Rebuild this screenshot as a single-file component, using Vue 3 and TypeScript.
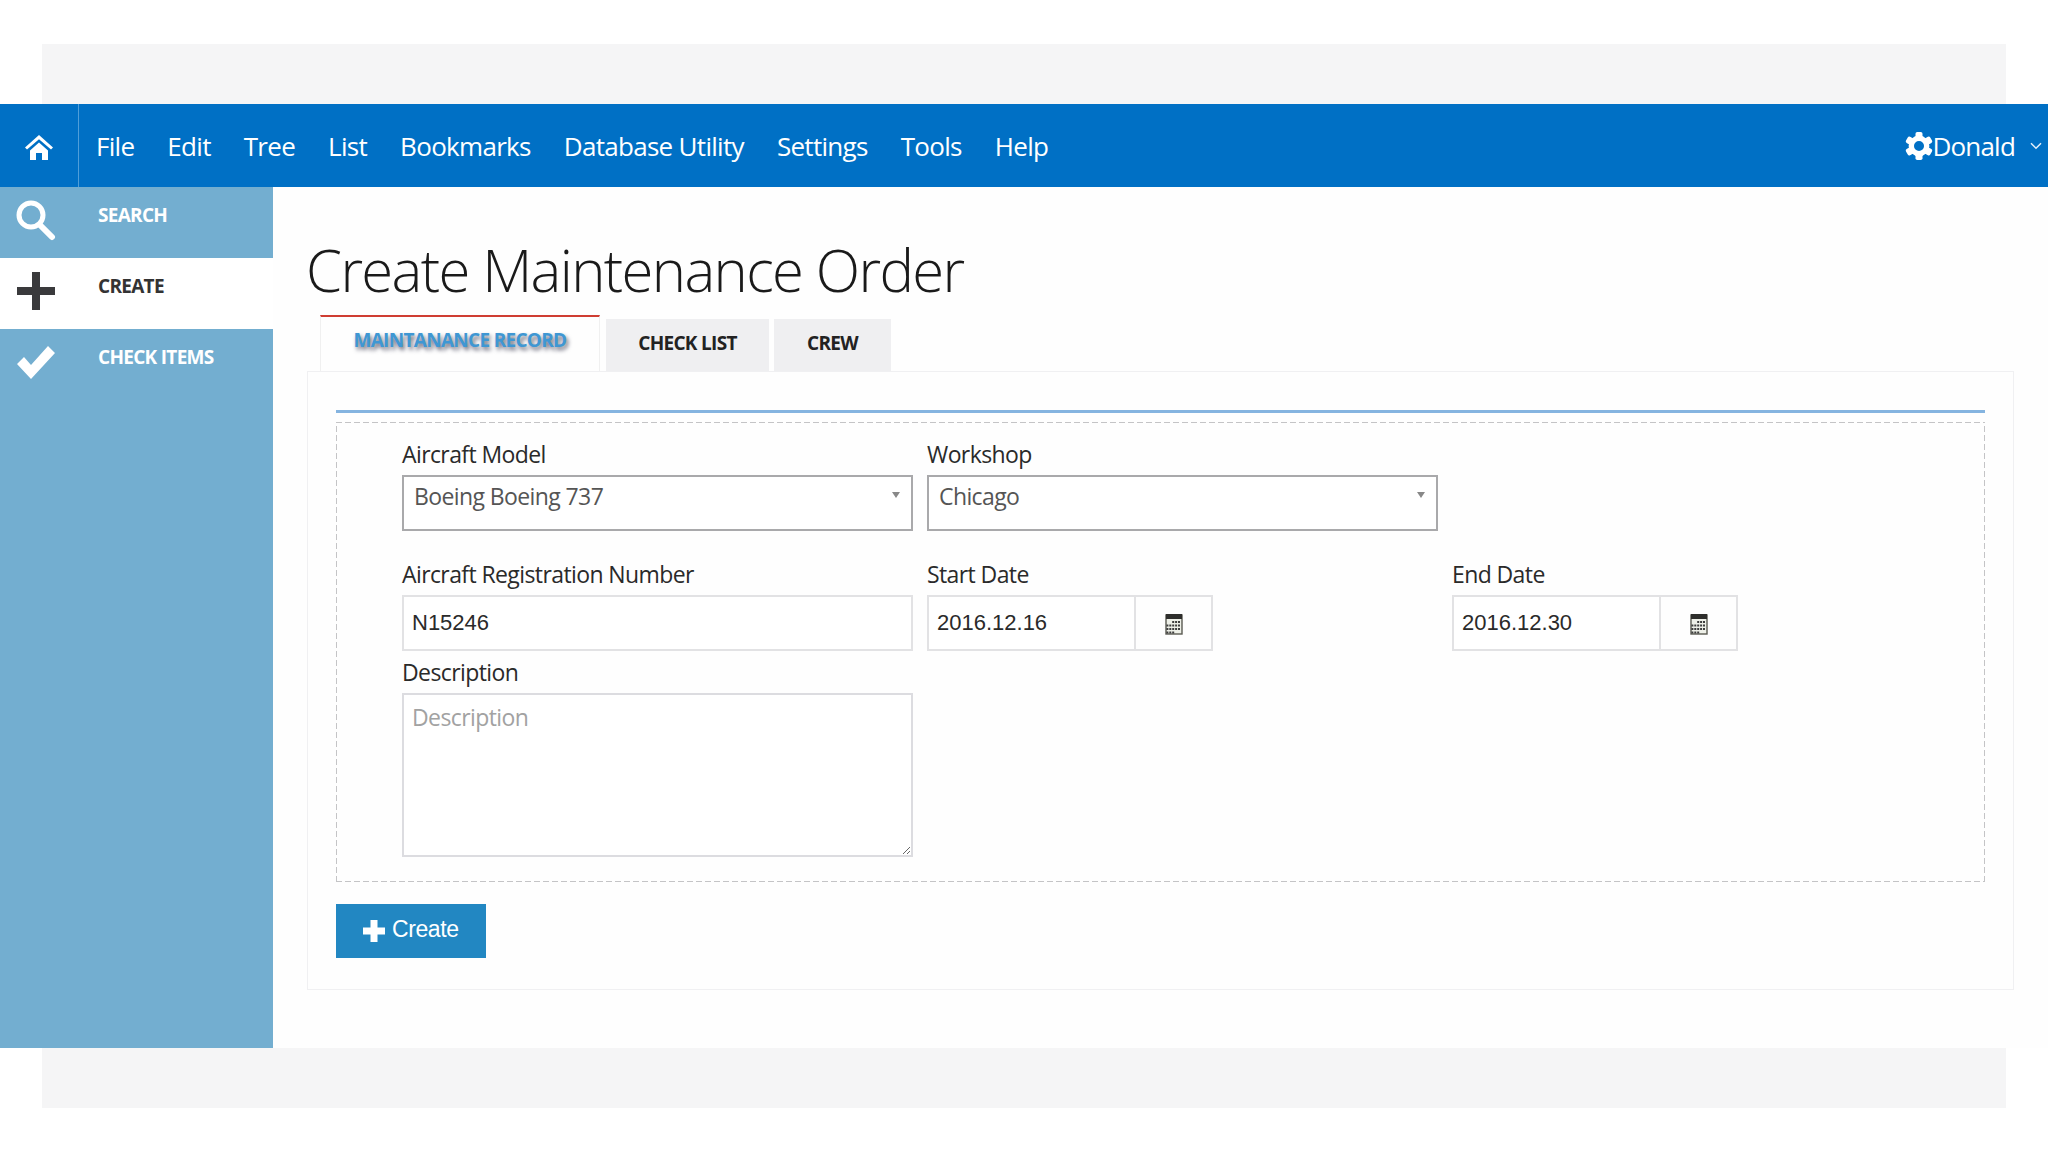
<template>
  <div class="page">
    <div class="band band-top"></div>

    <nav class="navbar">
      <a class="home-cell">
        <svg width="28" height="25" viewBox="0 0 28 25" fill="#fff">
          <path d="M14 0 L0 12.4 L2 14.6 L14 4.2 L26 14.6 L28 12.4 Z" />
          <path d="M5 15.4 L14 7.4 L23 15.4 V25 H17 V18 H11 V25 H5 Z" />
        </svg>
      </a>
      <ul class="menu">
        <li v-for="item in menuItems" :key="item">{{ item }}</li>
      </ul>
      <div class="user">
        <svg width="28" height="28" viewBox="-12 -12 24 24" fill="#fff">
          <rect v-for="a in gearTeeth" :key="a" x="-3" y="-12" width="6" height="6" rx="1.5" :transform="`rotate(${a})`" />
          <circle r="6.6" fill="none" stroke="#fff" stroke-width="4.6" />
        </svg>
        <span class="user-name">Donald</span>
        <svg class="user-caret" width="12" height="8" viewBox="0 0 12 8" fill="none" stroke="#e4effa" stroke-width="1.5">
          <path d="M1 1.2 L6 6.2 L11 1.2" />
        </svg>
      </div>
    </nav>

    <div class="body-row">
      <aside class="sidebar">
        <div class="side-item">
          <svg class="side-icon" width="42" height="42" viewBox="0 0 42 42" fill="none" stroke="#fff">
            <circle cx="16" cy="16" r="12" stroke-width="5" />
            <path d="M25 26 L37 38" stroke-width="6" stroke-linecap="round" />
          </svg>
          <span>SEARCH</span>
        </div>
        <div class="side-item active">
          <svg class="side-icon" width="42" height="42" viewBox="0 0 42 42" fill="#3a3a3c">
            <path d="M17 2 H25 V17 H40 V25 H25 V40 H17 V25 H2 V17 H17 Z" />
          </svg>
          <span>CREATE</span>
        </div>
        <div class="side-item">
          <svg class="side-icon" width="42" height="42" viewBox="0 0 42 42" fill="#fff">
            <path d="M2 23 L9 16 L16 24 L33 5 L40 12 L16 38 Z" />
          </svg>
          <span>CHECK ITEMS</span>
        </div>
      </aside>

      <main class="content">
        <h1 class="title">Create Maintenance Order</h1>

        <div class="tabs">
          <div class="tab active"><span>MAINTANANCE RECORD</span></div>
          <div class="tab check"><span>CHECK LIST</span></div>
          <div class="tab crew"><span>CREW</span></div>
        </div>

        <section class="panel">
          <div class="rule"></div>
          <div class="dashed">
            <div class="form-grid">
              <div class="field">
                <label>Aircraft Model</label>
                <div class="select"><span>Boeing Boeing 737</span><i class="arrow"></i></div>
              </div>
              <div class="field">
                <label>Workshop</label>
                <div class="select"><span>Chicago</span><i class="arrow"></i></div>
              </div>
              <div></div>

              <div class="field">
                <label>Aircraft Registration Number</label>
                <input class="input" type="text" value="N15246" readonly />
              </div>
              <div v-for="d in dates" :key="d.label" class="field">
                <label>{{ d.label }}</label>
                <div class="date">
                  <input class="input date-input" type="text" :value="d.value" readonly />
                  <span class="date-btn">
                    <svg width="18" height="22" viewBox="0 0 18 22">
                      <rect x="1" y="2" width="16" height="19" fill="#eef0e8" stroke="#5a5a52" stroke-width="1.4" />
                      <rect x="1" y="1" width="16" height="5" fill="#2e2e2c" />
                      <g fill="#3c3c3c">
                        <template v-for="(row, r) in calendarDots" :key="r">
                          <rect v-for="c in row" :key="c" :x="1.4 + c * 2.9" :y="8 + r * 3.5" width="2" height="2" />
                        </template>
                      </g>
                    </svg>
                  </span>
                </div>
              </div>

              <div class="field desc">
                <label>Description</label>
                <textarea class="input textarea" placeholder="Description"></textarea>
              </div>
            </div>
          </div>

          <button class="create-btn" type="button">
            <svg width="24" height="24" viewBox="0 0 24 24" fill="#fff">
              <path d="M8.5 1 H15.5 V8.5 H23 V15.5 H15.5 V23 H8.5 V15.5 H1 V8.5 H8.5 Z" />
            </svg>
            <span>Create</span>
          </button>
        </section>
      </main>
    </div>

    <div class="band band-bottom"></div>
  </div>
</template>

<script setup lang="ts">
const menuItems = ['File', 'Edit', 'Tree', 'List', 'Bookmarks', 'Database Utility', 'Settings', 'Tools', 'Help']
const gearTeeth = [0, 60, 120, 180, 240, 300]
// column indexes of the day dots, the first week starts midway
const calendarDots = [[2, 3, 4], [0, 1, 2, 3, 4], [0, 1, 2, 3, 4], [0, 1, 2]]
const dates = [
  { label: 'Start Date', value: '2016.12.16' },
  { label: 'End Date', value: '2016.12.30' },
]
</script>

<style>
html,
body {
  margin: 0;
  background: #fff;
}
</style>

<style scoped>
.page {
  width: 2048px;
  height: 1152px;
  overflow: hidden;
  display: flex;
  flex-direction: column;
  font-family: "Open Sans", "Noto Sans", sans-serif;
  color: #333;
}

.band {
  height: 60px;
  margin: 0 42px;
  background: #f5f5f6;
  flex: none;
}
.band-top {
  margin-top: 44px;
}

.navbar {
  height: 83px;
  flex: none;
  display: flex;
  align-items: center;
  background: #0070c5;
  color: #fff;
}
.home-cell {
  width: 79px;
  height: 100%;
  box-sizing: border-box;
  border-right: 1px solid #4f9ed9;
  display: flex;
  align-items: center;
  justify-content: center;
  padding-top: 4px;
}
.menu {
  display: flex;
  gap: 33px;
  list-style: none;
  margin: 0;
  padding: 0 0 0 17px;
  font-size: 26px;
  letter-spacing: -0.7px;
}
.user {
  margin-left: auto;
  display: flex;
  align-items: center;
  padding-right: 6px;
}
.user-name {
  margin-left: -1px;
  font-size: 26px;
  letter-spacing: -0.8px;
}
.user-caret {
  margin-left: 15px;
}

.body-row {
  flex: none;
  height: 861px;
  display: flex;
}
.sidebar {
  width: 273px;
  flex: none;
  background: #73aed0;
}
.side-item {
  height: 71px;
  display: flex;
  padding: 15px 0 0 15px;
  box-sizing: border-box;
  color: #fff;
  font-size: 19px;
  font-weight: 700;
  letter-spacing: -0.7px;
}
.side-item.active {
  background: #fff;
  color: #333;
}
.side-item span {
  margin-left: 41px;
}
.side-icon {
  flex: none;
  margin-top: -3px;
}

.content {
  flex: 1;
  padding: 0 34px;
  background: #fefefe;
}
.title {
  margin: 46px 0 0 -1px;
  font-size: 58px;
  line-height: 74px;
  font-weight: 300;
  color: #1a1a1a;
  letter-spacing: -1.62px;
}
.tabs {
  display: flex;
  align-items: flex-end;
  margin: 8px 0 0 13px;
  gap: 6px;
}
.tab {
  height: 52px;
  box-sizing: border-box;
  display: flex;
  align-items: center;
  justify-content: center;
  padding-bottom: 4px;
  background: #efeff1;
  color: #222;
  font-size: 19px;
  font-weight: 700;
  letter-spacing: -0.7px;
}
.tab.active {
  width: 280px;
  height: 56px;
  background: #fefefe;
  border-top: 2px solid #cf3d32;
  border-left: 1px solid #f0f0f0;
  border-right: 1px solid #f0f0f0;
  color: #3f97d3;
  text-shadow: 2px 3px 4px #667;
  padding-bottom: 8px;
}
.tab.check {
  width: 163px;
}
.tab.crew {
  width: 117px;
  margin-left: -1px;
}

.panel {
  box-sizing: border-box;
  height: 619px;
  padding: 38px 28px 0;
  border: 1px solid #f0f0f2;
  background: #fefefe;
}
.rule {
  height: 3px;
  background: #85b4e0;
}
.dashed {
  box-sizing: border-box;
  height: 460px;
  margin-top: 9px;
  padding: 19px 0 0 66px;
  background:
    repeating-linear-gradient(90deg, #c4c4c6 0 6px, transparent 6px 9px) top / 100% 1px no-repeat,
    repeating-linear-gradient(90deg, #c4c4c6 0 6px, transparent 6px 9px) bottom / 100% 1px no-repeat,
    repeating-linear-gradient(0deg, #c4c4c6 0 6px, transparent 6px 9px) left / 1px 100% no-repeat,
    repeating-linear-gradient(0deg, #c4c4c6 0 6px, transparent 6px 9px) right / 1px 100% no-repeat;
}
.form-grid {
  display: grid;
  grid-template-columns: repeat(3, 511px);
  column-gap: 14px;
  grid-auto-rows: min-content;
}
.field {
  display: flex;
  flex-direction: column;
}
.field:nth-child(n + 4) {
  margin-top: 30px;
}
.field label {
  height: 34px;
  font-size: 23px;
  line-height: 26px;
  letter-spacing: -0.6px;
  color: #2a2a2a;
}
.select {
  position: relative;
  box-sizing: border-box;
  height: 56px;
  padding: 4px 10px;
  border: 2px solid #a9a9ab;
  background: #fff;
  font-size: 23px;
  line-height: 30px;
  letter-spacing: -0.6px;
  color: #555;
}
.arrow {
  position: absolute;
  top: 15px;
  right: 11px;
  border-left: 4px solid transparent;
  border-right: 4px solid transparent;
  border-top: 6px solid #888;
}
.input {
  box-sizing: border-box;
  width: 100%;
  height: 56px;
  padding: 0 8px;
  border: 2px solid #e2e2e4;
  outline: none;
  background: #fff;
  font-family: "Liberation Sans", Arial, sans-serif;
  font-size: 22px;
  color: #2a2a2a;
}
.date {
  display: flex;
  width: 286px;
  height: 56px;
  box-sizing: border-box;
}
.date-input {
  width: 209px;
  flex: none;
}
.date-btn {
  flex: 1;
  display: flex;
  align-items: center;
  justify-content: center;
  border: 2px solid #e2e2e4;
  border-left: 0;
  padding-top: 2px;
}
.desc {
  grid-column: 1;
  margin-top: 8px !important;
}
.textarea {
  display: block;
  height: 164px;
  padding: 6px 8px;
  font-family: "Open Sans", sans-serif;
  font-size: 23px;
  letter-spacing: -0.6px;
  border-color: #dcdce0;
  resize: both;
}
.textarea::placeholder {
  color: #a2a2a2;
}
.create-btn {
  margin-top: 22px;
  width: 150px;
  height: 54px;
  display: flex;
  align-items: center;
  padding: 0 0 0 26px;
  border: 0;
  background: #2287c2;
  color: #fff;
  font-family: "Liberation Sans", Arial, sans-serif;
  font-size: 23px;
  letter-spacing: -0.4px;
}
.create-btn span {
  margin: -4px 0 0 6px;
}
</style>
